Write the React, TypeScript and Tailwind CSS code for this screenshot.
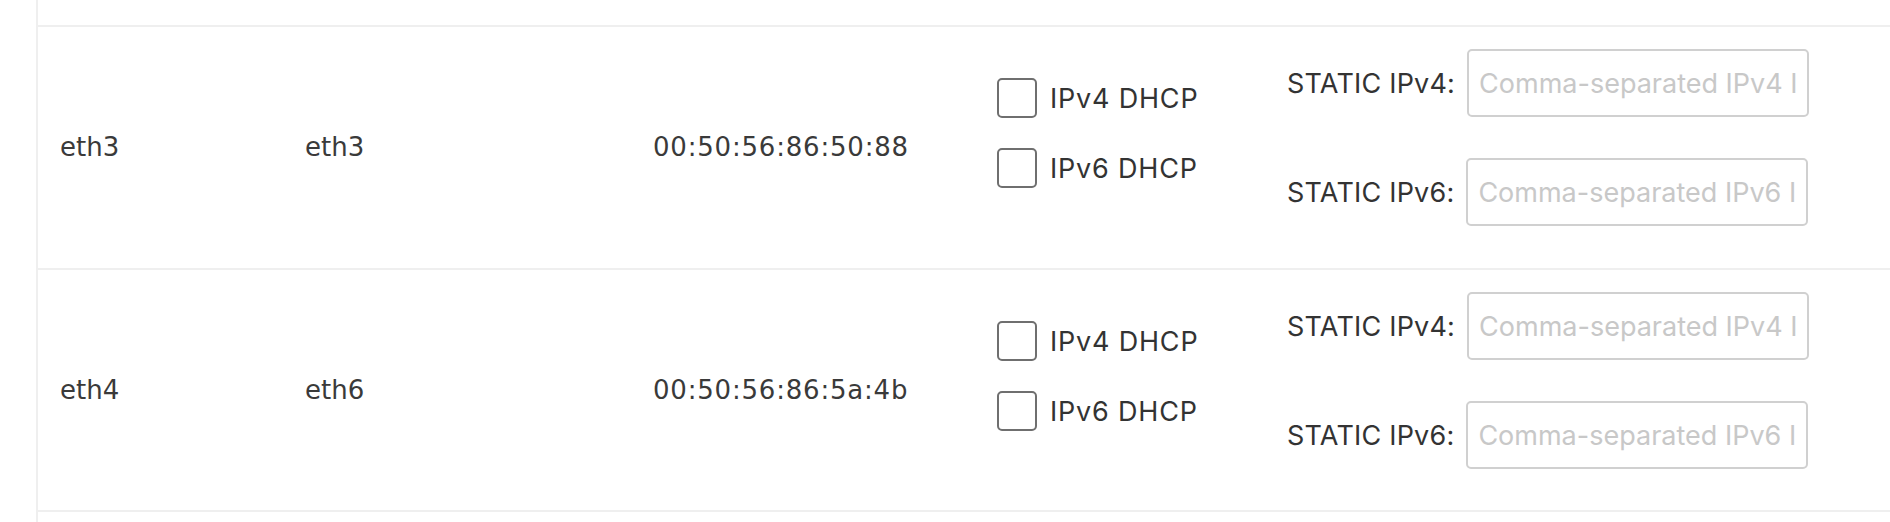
import { useState } from 'react';

type Iface = { name: string; device: string; mac: string };

const rows: Iface[] = [
  { name: 'eth3', device: 'eth3', mac: '00:50:56:86:50:88' },
  { name: 'eth4', device: 'eth6', mac: '00:50:56:86:5a:4b' },
];

function DhcpBox({ label }: { label: string }) {
  const [checked, setChecked] = useState(false);
  return (
    <label className="flex items-center gap-[13px] text-[27px] leading-none tracking-[0.8px] text-[#333333]">
      <input
        type="checkbox"
        checked={checked}
        onChange={(e) => setChecked(e.target.checked)}
        className="h-[40px] w-[40px] appearance-none rounded-[5px] border-2 border-[#6f6f6f] bg-white"
      />
      <span>{label}</span>
    </label>
  );
}

function StaticField({ label, placeholder }: { label: string; placeholder: string }) {
  return (
    <div className="flex items-center gap-[12px]">
      <span className="text-[27px] leading-none tracking-[0.2px] text-[#333333]">{label}</span>
      <input
        type="text"
        placeholder={placeholder}
        className="h-[68px] w-[342px] rounded-[5px] border-2 border-[#d0d0d0] bg-white px-[10px] text-[27px] text-[#333333] outline-none placeholder:text-[#c8c8c8]"
      />
    </div>
  );
}

function Row({ row, last }: { row: Iface; last: boolean }) {
  return (
    <div className={last ? 'flex h-[242px] border-t-2 border-[#efefef]' : 'flex h-[243px] border-t-2 border-[#efefef]'}>
      <div className="flex w-[245px] items-center pl-[22px] font-['DejaVu_Sans',sans-serif] text-[26px] text-[#3a3a3a]">
        {row.name}
      </div>
      <div className="flex w-[348px] items-center pl-[22px] font-['DejaVu_Sans',sans-serif] text-[26px] text-[#3a3a3a]">
        {row.device}
      </div>
      <div className="flex w-[344px] items-center pl-[22px] font-['DejaVu_Sans',sans-serif] text-[26px] tracking-[0.8px] text-[#3a3a3a]">
        {row.mac}
      </div>
      <div className="flex w-[290px] flex-col gap-[30px] pl-[22px] pt-[51px] font-['Inter',sans-serif]">
        <DhcpBox label="IPv4 DHCP" />
        <DhcpBox label="IPv6 DHCP" />
      </div>
      <div className="flex flex-col gap-[41px] pl-[22px] pt-[22px] font-['Inter',sans-serif]">
        <StaticField label="STATIC IPv4:" placeholder="Comma-separated IPv4 IPs" />
        <StaticField label="STATIC IPv6:" placeholder="Comma-separated IPv6 IPs" />
      </div>
    </div>
  );
}

export default function App() {
  return (
    <div className="min-h-[522px] w-full bg-white">
      <div className="ml-[36px] min-h-[522px] border-l-2 border-[#efefef] pt-[25px]">
        <div className="border-b-2 border-[#efefef]">
          {rows.map((r, i) => (
            <Row key={r.name} row={r} last={i === rows.length - 1} />
          ))}
        </div>
      </div>
    </div>
  );
}
